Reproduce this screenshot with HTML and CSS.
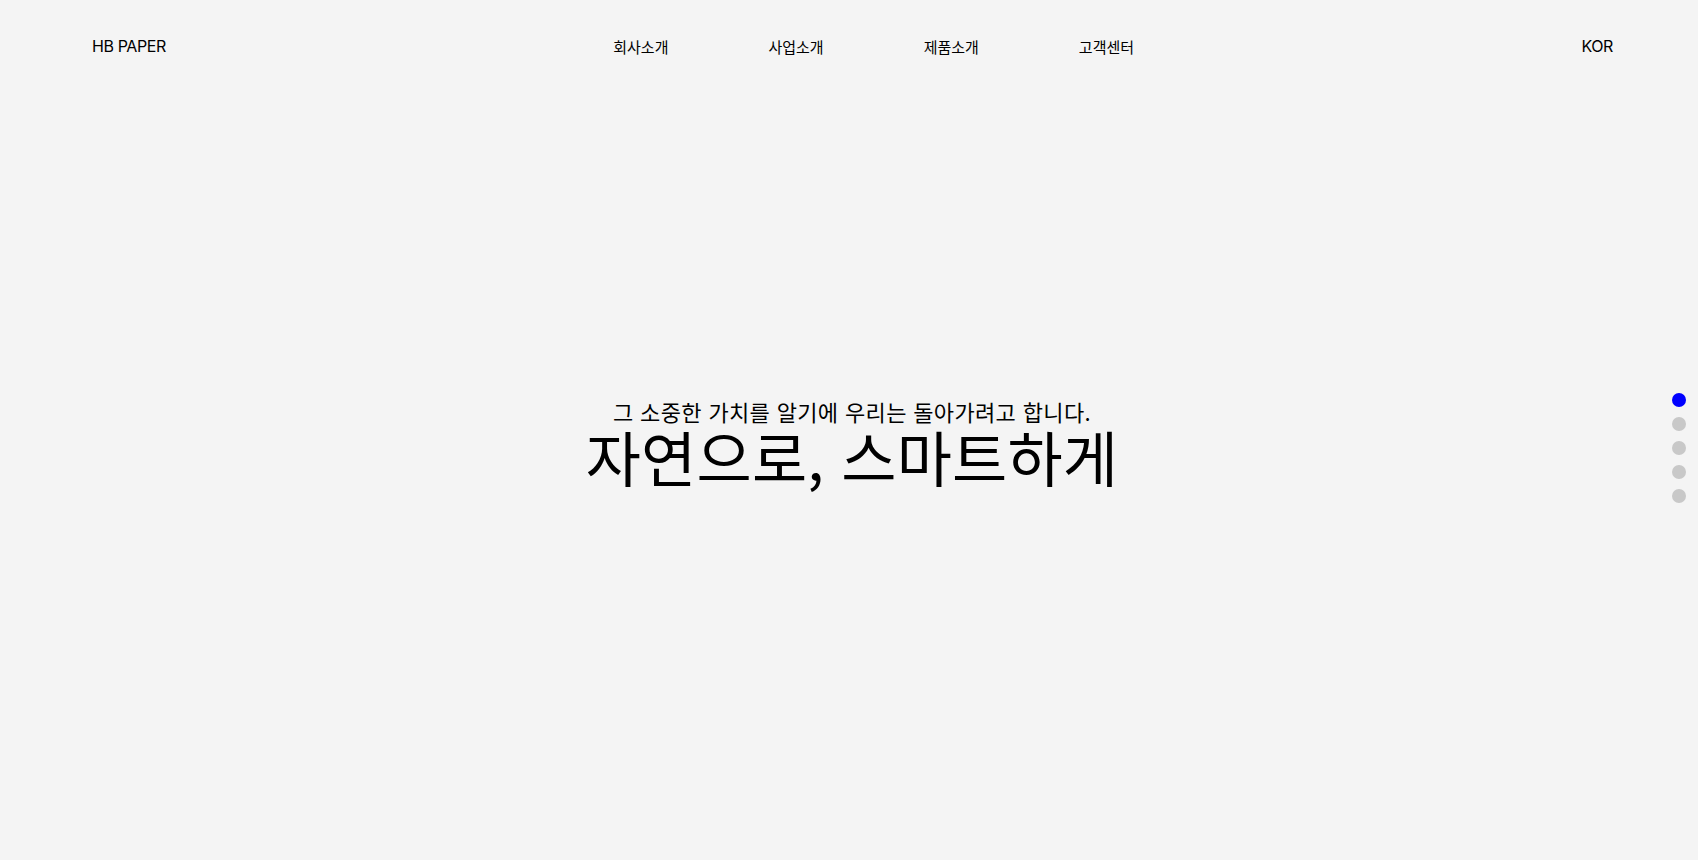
FILE: index.html
```html
<!DOCTYPE html>
<html lang="ko">
<head>
<meta charset="utf-8">
<title>HB PAPER</title>
<link rel="stylesheet" href="styles.css">
</head>
<body>
<div class="page">
  <header class="header">
    <div class="logo">HB PAPER</div>
    <nav class="gnb">
      <a class="gnb-item" href="#">회사소개</a>
      <a class="gnb-item" href="#">사업소개</a>
      <a class="gnb-item" href="#">제품소개</a>
      <a class="gnb-item" href="#">고객센터</a>
    </nav>
    <div class="lang">KOR</div>
  </header>
  <main class="hero">
    <p class="hero-sub">그 소중한 가치를 알기에 우리는 돌아가려고 합니다.</p>
    <h1 class="hero-title">자연으로, 스마트하게</h1>
  </main>
  <ul class="pager">
    <li class="dot active"></li>
    <li class="dot"></li>
    <li class="dot"></li>
    <li class="dot"></li>
    <li class="dot"></li>
  </ul>
</div>
</body>
</html>
```
FILE: styles.css
```css
* { box-sizing: border-box; }
html, body {
  margin: 0;
  padding: 0;
  background: #f4f4f4;
}
body {
  font-family: "Inter", "Noto Sans CJK KR", sans-serif;
  color: #000;
  width: 1698px;
  height: 860px;
  overflow: hidden;
}
.page {
  position: relative;
  height: 860px;
}
.header {
  height: 92px;
  padding: 0 85px 0 92px;
  display: flex;
  align-items: center;
  justify-content: space-between;
}
.logo, .lang {
  font-size: 16px;
  letter-spacing: -0.4px;
}
.gnb {
  display: flex;
  gap: 100px;
}
.gnb-item {
  color: #000;
  text-decoration: none;
  font-family: "Noto Sans CJK KR", sans-serif;
  font-size: 15px;
  letter-spacing: 0;
}
.hero {
  display: flex;
  flex-direction: column;
  align-items: center;
  padding: 304px 0 0 6px;
}
.hero-sub {
  margin: 0;
  font-family: "Noto Sans CJK KR", sans-serif;
  font-size: 22px;
  line-height: 30px;
  letter-spacing: 0.35px;
}
.hero-title {
  margin: 0;
  font-family: "Noto Sans CJK KR", sans-serif;
  font-weight: 400;
  font-size: 60px;
  line-height: 60px;
  letter-spacing: 0.2px;
}
.pager {
  position: absolute;
  right: 12px;
  top: 393px;
  margin: 0;
  padding: 0;
  list-style: none;
  display: flex;
  flex-direction: column;
  gap: 10px;
}
.dot {
  width: 14px;
  height: 14px;
  border-radius: 50%;
  background: #c8c8c8;
}
.dot.active { background: #0000ff; }
```
